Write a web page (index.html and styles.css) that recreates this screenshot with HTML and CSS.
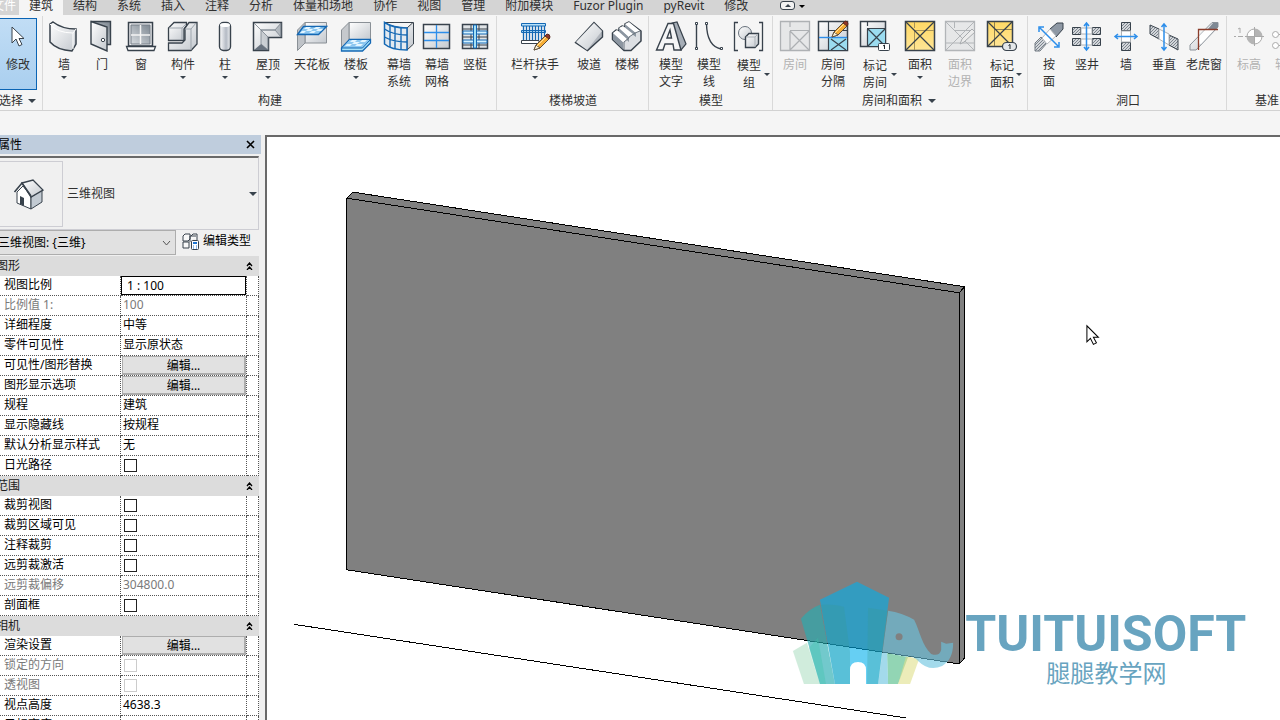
FILE: index.html
```
<!DOCTYPE html>
<html lang="zh-CN">
<head>
<meta charset="utf-8">
<title>三维视图</title>
<link rel="stylesheet" href="styles.css">
</head>
<body>
<svg class="defs" aria-hidden="true">
  <defs>
    <linearGradient id="metal" x1="0" y1="0" x2="1" y2="1"><stop offset="0" stop-color="#fff"/><stop offset="1" stop-color="#c3c8ce"/></linearGradient>
    <linearGradient id="steel" x1="1" y1="0" x2="0" y2="1"><stop offset="0" stop-color="#7e8892"/><stop offset="1" stop-color="#d8dce0"/></linearGradient>
    <linearGradient id="round" x1="0" y1="0" x2="1" y2="0"><stop offset="0" stop-color="#fff"/><stop offset=".6" stop-color="#b4bac4"/><stop offset="1" stop-color="#eef0f2"/></linearGradient>
    <linearGradient id="gold" x1="0" y1="0" x2="0" y2="1"><stop offset="0" stop-color="#ffd964"/><stop offset="1" stop-color="#ffe596"/></linearGradient>
    <pattern id="hatch" width="3" height="3" patternUnits="userSpaceOnUse"><rect width="3" height="3" fill="#d3d6da"/><path d="M0 3L3 0" stroke="#7c858e" stroke-width="1"/></pattern>
    <g id="pencil"><path d="M15 30L17 25L27 15L31 18L21 28Z" fill="#f6ad35" stroke="#5b4a39"/><path d="M15 30L17 25L21 28Z" fill="#fff3d6" stroke="#66563f"/><path d="M26 16L28 14Q31 14 31 17L30 19Z" fill="#8e3528" stroke="#5a2a22"/><path d="M18 26L27 17" stroke="#ffe3a1"/></g>
  </defs>
</svg>

<header class="ribbon">
  <nav class="tabs">
    <button class="tab file">文件</button><button class="tab active">建筑</button><button class="tab">结构</button><button class="tab">系统</button><button class="tab">插入</button><button class="tab">注释</button><button class="tab">分析</button><button class="tab">体量和场地</button><button class="tab">协作</button><button class="tab">视图</button><button class="tab">管理</button><button class="tab">附加模块</button><button class="tab">Fuzor Plugin</button><button class="tab">pyRevit</button><button class="tab">修改</button>
    <button class="minimize" aria-label="最小化功能区"><span class="pill"><i class="up"></i></span><i class="arrow black"></i></button>
  </nav>

  <div class="panels">
    <section class="panel select">
      <div class="tools">
        <button class="tool pressed"><svg class="icon" viewBox="0 0 32 32"><path d="M10 7V23L14 19L17 26L20 24.500L17 18.500H22Z" fill="#fff" stroke="#38424c"/></svg><span>修改</span></button>
      </div>
      <h2>选择 <i class="arrow big"></i></h2>
    </section>

    <section class="panel">
      <div class="tools">
        <button class="tool w40"><svg class="icon" viewBox="0 0 32 32"><path d="M2 4L5 2Q14 9 28 9V24L24 31Q9 30 2 22Z" fill="url(#metal)" stroke="#38424c" stroke-width="1.500"/><path d="M2 4Q9 13 25 13L28 9M25 13V29" fill="none" stroke="#fff"/></svg><span>墙</span><i class="arrow"></i></button>
        <button class="tool w36"><svg class="icon" viewBox="0 0 32 32"><path d="M5 1.500H24.500V24.500H18" fill="url(#steel)" stroke="#38424c" stroke-width="1.400"/><path d="M5 1.500L21 7V31L5 24Z" fill="url(#metal)" stroke="#38424c" stroke-width="1.400"/><circle cx="17" cy="20" r="1.700" fill="#fff" stroke="#38424c"/></svg><span>门</span></button>
        <button class="tool w42"><svg class="icon" viewBox="0 0 32 32"><path d="M3.500 2.500H27.500V26H3.500Z" fill="#eceef0" stroke="#38424c" stroke-width="1.500"/><path d="M6 5H25V24H6Z" fill="url(#steel)" stroke="#777f88"/><path d="M15.500 5V24M6 15H25" stroke="#f4f4f4" stroke-width="1.500"/><path d="M1.500 26.500H30.500L29 30.500H3Z" fill="#fff" stroke="#38424c" stroke-width="1.300"/></svg><span>窗</span></button>
        <button class="tool w42"><svg class="icon" viewBox="0 0 32 32"><path d="M1.500 20.500V8L7 2.500H19.500V6L17 9V20.500Z" fill="url(#metal)" stroke="#38424c" stroke-width="1.300"/><path d="M1.500 23V30.500H24L30 24V2.500H22L18 8V20L15 23Z" fill="url(#metal)" stroke="#38424c" stroke-width="1.300"/><path d="M2 8H15L19 4M15 8V20M18 9H24L29 3M24 9V30" stroke="#9da5ad" fill="none"/></svg><span>构件</span><i class="arrow"></i></button>
        <button class="tool w42"><svg class="icon" viewBox="0 0 32 32"><rect x="10.500" y="2.500" width="11" height="28" rx="4" fill="url(#round)" stroke="#38424c" stroke-width="1.400"/><ellipse cx="16" cy="5" rx="5" ry="2" fill="#fff"/></svg><span>柱</span><i class="arrow"></i></button>
        <button class="tool w44"><svg class="icon" viewBox="0 0 32 32"><path d="M1.500 2.500H29.500V17.500H16.500V30.500H1.500Z" fill="url(#metal)" stroke="#38424c" stroke-width="1.500"/><path d="M2 3L9 10H23L29 3V17L23 10H9V24L16 30V17L9 10" fill="url(#steel)" fill-opacity=".55" stroke="#77808a" stroke-width=".8"/><path d="M2 30L9 24L16 30Z" fill="#68727e"/></svg><span>屋顶</span><i class="arrow"></i></button>
        <button class="tool w44"><svg class="icon" viewBox="0 0 32 32"><path d="M9 2.500H30.500V23H9Z" fill="url(#metal)" stroke="#8a9096"/><path d="M1.500 10L9 2.500V23L1.500 30.500Z" fill="#bfc3c8" stroke="#8a9096"/><path d="M7.500 6.500H30.500L22.500 14.500H1.500Z" fill="#8cc7f0" stroke="#1468b4" stroke-width="1.400"/><path d="M10 7H15L13 9H8ZM20 7H25L22 9H17ZM12 9H17L15 11H10ZM22 9H27L25 11H20ZM6 11H10L8 13H4ZM16 11H20L18 13H13Z" fill="#e3f5ff"/></svg><span>天花板</span></button>
        <button class="tool w44"><svg class="icon" viewBox="0 0 32 32"><path d="M9 2.500H30.500V20H9Z" fill="url(#metal)" stroke="#8a9096"/><path d="M1.500 10L9 2.500V20L1.500 28Z" fill="#c6c9cd" stroke="#8a9096"/><path d="M9.500 19.500H30.500V23L22.500 31H1.500V28Z" fill="#a8e2f8" stroke="#1468b4" stroke-width="1.300"/><path d="M9.500 19.500H30.500L22.500 28H1.500Z" fill="#8cc7f0" stroke="#1468b4"/><path d="M12 20H17L15 22H10ZM22 20H27L25 22H20ZM14 22H20L17 24H12ZM7 24H12L10 26H5ZM17 24H23L21 26H15Z" fill="#e3f5ff"/></svg><span>楼板</span><i class="arrow"></i></button>
        <button class="tool w42"><svg class="icon" viewBox="0 0 32 32"><path d="M1.500 2.500H30.500V24L24 30V8L30 2.500M24 8Q10 8 1.500 2.500" fill="url(#metal)" stroke="#38424c"/><path d="M1.500 2.500Q10 8 24 8V30Q8 30 1.500 24Z" fill="#e3eaf0" stroke="#1468b4" stroke-width="1.500"/><path d="M1.500 9Q10 15 24 15M1.500 17Q10 22 24 22M7 5V27M12 7V29M18 8V30" fill="none" stroke="#1468b4" stroke-width="1.400"/></svg><span>幕墙<br>系统</span></button>
        <button class="tool w34"><svg class="icon" viewBox="0 0 32 32"><rect x="2.500" y="4.500" width="26" height="24" fill="url(#metal)" stroke="#38424c" stroke-width="1.500"/><path d="M15.500 5V28M3 12.500H28M3 20.500H28" stroke="#2d8eea" stroke-width="1.300"/></svg><span>幕墙<br>网格</span></button>
        <button class="tool w42"><svg class="icon" viewBox="0 0 32 32"><path d="M3.500 4.500H28.500V28.500H3.500Z" fill="#dfe3e6" stroke="#38424c" stroke-width="1.500"/><path d="M12 5V28M20 5V28M4 9H28M4 17H28M4 25H28" stroke="#38424c"/><path d="M4 11H28V14H4ZM4 20H28V23H4Z" fill="#d4f1ff" stroke="#1468b4"/><path d="M14.500 5V28H17.500V5Z" fill="#a5e1f6" stroke="#1468b4"/></svg><span>竖梃</span></button>
      </div>
      <h2>构建</h2>
    </section>

    <section class="panel inset">
      <div class="tools">
        <button class="tool w74"><svg class="icon" viewBox="0 0 32 32"><path d="M2.500 3.500H26.500V6H2.500ZM2.500 10.500H26.500V12.500H2.500Z" fill="#b7e1fa" stroke="#1468b4"/><path d="M4.500 6V20M7.500 6V20M10.500 6V20M13.500 6V20M16.500 6V20M19.500 6V20M22.500 6V20M25.500 6V17" stroke="#1468b4" stroke-width="1.300"/><path d="M2.500 20.500H20V23.500H2.500Z" fill="#fff" stroke="#38424c"/><use href="#pencil"/></svg><span>栏杆扶手</span><i class="arrow"></i></button>
        <button class="tool w34"><svg class="icon" viewBox="0 0 32 32"><path d="M21 2.500L29.500 11V17L14.500 30.500L2.500 22.500Z" fill="#b1b6bd" stroke="#38424c" stroke-width="1.400"/><path d="M21 3L29 11L14 30L3 22Z" fill="url(#metal)"/></svg><span>坡道</span></button>
        <button class="tool w42"><svg class="icon" viewBox="0 0 32 32"><path d="M1.500 13L5 10L8 11V8L11 6L14 7V4L18 2L30 11V21L20 30.500H13L1.500 19.500Z" fill="#dcdfe3" stroke="#38424c" stroke-width="1.500" stroke-linejoin="round"/><path d="M2 13L12 22V29L2 19.500ZM8 8L18 17V22L8 13ZM14 4L25 13V17L14 9Z" fill="#8c96a1"/><path d="M2 13L6 10L16 19L12 22ZM8 8L12 6L22 14L18 17ZM14 4L18 2L29 11L25 13Z" fill="#fff"/><path d="M13 30V22L18 18V17L24 13L29 11" fill="none" stroke="#68727c"/></svg><span>楼梯</span></button>
      </div>
      <h2>楼梯坡道</h2>
    </section>

    <section class="panel inset">
      <div class="tools">
        <button class="tool w42"><svg class="icon" viewBox="0 0 32 32"><path d="M17 3L22 2L31 24L26 30L22 28L14 9Z" fill="#a5adb6" stroke="#38424c" stroke-width="1.200"/><path d="M1.500 30L13 3.500H18.500L26 30H19L18 24H10L8 30ZM12 18H16.500L15 10Z" fill="#f4f5f6" fill-rule="evenodd" stroke="#38424c" stroke-width="1.400"/></svg><span>模型<br>文字</span></button>
        <button class="tool w34"><svg class="icon" viewBox="0 0 32 32"><path d="M3.500 4V28M13.500 4Q14 26 28 29" fill="none" stroke="#38424c" stroke-width="1.400"/><path d="M2.500 2.500H4.500V4.500H2.500ZM2.500 27.500H4.500V29.500H2.500ZM12.500 2.500H14.500V4.500H12.500ZM27.500 27.500H29.500V29.500H27.500Z" fill="#fff" stroke="#38424c"/></svg><span>模型<br>线</span></button>
        <button class="tool w46 split"><svg class="icon" viewBox="0 0 32 32"><path d="M5 2.500H1.500V30.500H5M26 2.500H29.500V30.500H26" fill="none" stroke="#38424c" stroke-width="1.300"/><circle cx="12" cy="13" r="6.500" fill="url(#metal)" stroke="#68727c"/><path d="M12.500 17L16 13.500H25.500V24L22 27.500H12.500Z" fill="url(#metal)" stroke="#38424c" stroke-width="1.400"/><path d="M13 17H22L25 14M22 17V27" stroke="#adb3b9" fill="none"/></svg><span>模型<br>组</span><i class="arrow"></i></button>
      </div>
      <h2>模型</h2>
    </section>

    <section class="panel inset rooms">
      <div class="tools">
        <button class="tool w42" disabled><svg class="icon" viewBox="0 0 32 32"><path d="M1.500 1.500H30.500V30.500H1.500Z" fill="#e6e7e8" stroke="#aeb1b4" stroke-width="1.300"/><path d="M11 2V7M11 11V30M11 10.500H30M11 11L30 30M30 11L11 30" stroke="#adb0b3" stroke-width="1.200"/></svg><span>房间</span></button>
        <button class="tool w34"><svg class="icon" viewBox="0 0 32 32"><path d="M1.500 1.500H30.500V30.500H1.500Z" fill="url(#metal)" stroke="#38424c" stroke-width="1.500"/><path d="M12 17H30V30H12Z" fill="#9bdcf0"/><path d="M11.500 2V30M11 10.500H30M14 19L29 30M29 19L14 30" stroke="#38424c" stroke-width="1.200"/><path d="M2 17.500H30" stroke="#2d8eea" stroke-width="1.400"/><use href="#pencil" transform="translate(0 -13)"/></svg><span>房间<br>分隔</span></button>
        <button class="tool w50 split"><svg class="icon" viewBox="0 0 32 32"><path d="M1.500 1.500H26.500V26.500H1.500Z" fill="url(#metal)" stroke="#38424c" stroke-width="1.500"/><path d="M9 9H26V26H9Z" fill="#9bdcf0"/><path d="M8.500 2V6M8.500 9V26M8 8.500H26M9 9L26 26M26 9L9 26" stroke="#38424c" stroke-width="1.200"/><rect x="19.500" y="23.500" width="11" height="7" rx="1" fill="#fff" stroke="#38424c"/><path d="M24 26L25.500 25V29" fill="none" stroke="#20282f"/></svg><span>标记<br>房间</span><i class="arrow"></i></button>
        <button class="tool w40"><svg class="icon" viewBox="0 0 32 32"><path d="M1.500 1.500H30.500V30.500H1.500Z" fill="url(#gold)" stroke="#38424c" stroke-width="1.500"/><path d="M10.500 2V8M10.500 11V30M10 10.500H30" stroke="#a99458"/><path d="M2 2L30 30M30 2L2 30" stroke="#38424c" stroke-width="1.200"/></svg><span>面积</span><i class="arrow"></i></button>
        <button class="tool w40" disabled><svg class="icon" viewBox="0 0 32 32"><path d="M1.500 1.500H30.500V30.500H1.500Z" fill="#e6e7e8" stroke="#b2b5b8" stroke-width="1.300"/><path d="M10.500 2V8M10 10.500H30M2 2L30 30M30 2L2 30M2 23H30" stroke="#b2b5b8"/><path d="M16 24L18 19L28 9L31 12L20 22Z" fill="#ececec" stroke="#a8abae"/></svg><span>面积<br>边界</span></button>
        <button class="tool w44 split"><svg class="icon" viewBox="0 0 32 32"><path d="M1.500 1.500H26.500V26.500H1.500Z" fill="url(#gold)" stroke="#38424c" stroke-width="1.500"/><path d="M8.500 2V8M8.500 10V26M8 9.500H26" stroke="#8e804f"/><path d="M2 2L26 26M26 2L2 26" stroke="#38424c" stroke-width="1.200"/><rect x="16.500" y="22.500" width="14" height="8" rx="4" fill="#e5e8ea" stroke="#38424c" stroke-width="1.200"/><path d="M22.500 25.500L24 24.500V29" fill="none" stroke="#20282f"/></svg><span>标记<br>面积</span><i class="arrow"></i></button>
      </div>
      <h2>房间和面积 <i class="arrow big"></i></h2>
    </section>

    <section class="panel openings">
      <div class="tools">
        <button class="tool w38"><svg class="icon" viewBox="0 0 32 32"><path d="M2 23L8 17L14 23L7 31H2Z" fill="url(#hatch)" stroke="#737b83"/><path d="M17 9L24 3H30V9L23 17Z" fill="#8e98a4" stroke="#38424c"/><path d="M9 18L17 9L23 16L14 24Z" fill="#fff" stroke="#b6babe"/><path d="M7 8L25 26M6 12V7H11M21 27H26V22" fill="none" stroke="#2d8eea" stroke-width="1.500"/></svg><span>按<br>面</span></button>
        <button class="tool w38"><svg class="icon" viewBox="0 0 32 32"><path d="M1.500 7.500H9.500V14.500H1.500ZM21.500 7.500H29.500V14.500H21.500ZM1.500 18.500H9.500V25.500H1.500ZM21.500 18.500H29.500V25.500H21.500Z" fill="url(#hatch)" stroke="#38424c"/><path d="M10 8H21V14H10ZM10 19H21V25H10Z" fill="#fff" stroke="#aeb2b6"/><path d="M15.500 3V30M13 6L15.500 3L18 6M13 27L15.500 30L18 27" fill="none" stroke="#2d8eea" stroke-width="1.500"/></svg><span>竖井</span></button>
        <button class="tool w40"><svg class="icon" viewBox="0 0 32 32"><path d="M11.500 2.500H20.500V10.500H11.500ZM11.500 22.500H20.500V30.500H11.500Z" fill="url(#hatch)" stroke="#38424c"/><path d="M11.500 11H20.500V22H11.500Z" fill="#fff" stroke="#aeb2b6"/><path d="M5 16.500H27M8 14L5 16.500L8 19M24 14L27 16.500L24 19" fill="none" stroke="#2d8eea" stroke-width="1.500"/></svg><span>墙</span></button>
        <button class="tool w36"><svg class="icon" viewBox="0 0 32 32"><path d="M2 5L11 9V19L2 14ZM21 15L30 19V30L21 25Z" fill="url(#hatch)" stroke="#38424c"/><path d="M11 9L21 14V25L11 19Z" fill="#fff" stroke="#aeb2b6"/><path d="M16 4V30M13.500 7L16 4L18.500 7M13.500 27L16 30L18.500 27" fill="none" stroke="#2d8eea" stroke-width="1.500"/></svg><span>垂直</span></button>
        <button class="tool w44"><svg class="icon" viewBox="0 0 32 32"><path d="M2 30V25L24 2.500H30V7L8 30Z" fill="url(#metal)" stroke="#8b9299"/><path d="M20 9L25 3H30V7L27 10Z" fill="#7f8994"/><path d="M10 23V17L18 9H27L13 24Z" fill="#fff"/><path d="M10.500 30V9.500H30" fill="none" stroke="#8b3d2b" stroke-width="1.300"/></svg><span>老虎窗</span></button>
      </div>
      <h2>洞口</h2>
    </section>

    <section class="panel datum">
      <div class="tools">
        <button class="tool w40" disabled><svg class="icon" viewBox="0 0 32 32"><path d="M1 16.500H3M5 16.500H10M12 16.500H15M5 9L7 8V13" fill="none" stroke="#aaa"/><circle cx="21.500" cy="16.500" r="7.500" fill="#fff" stroke="#aaa"/><path d="M21.500 16.500V9A7.500 7.500 0 0 1 29 16.500ZM21.500 16.500V24A7.500 7.500 0 0 1 14 16.500Z" fill="#b5b5b5"/><path d="M21.500 7V26M12 16.500H31" stroke="#aaa"/></svg><span>标高</span></button>
        <button class="tool w36" disabled><svg class="icon" viewBox="0 0 32 32"><path d="M8 14.500H31M8 25.500H31" stroke="#aaa"/><circle cx="4.500" cy="14.500" r="3" fill="#fff" stroke="#aaa"/><circle cx="4.500" cy="25.500" r="3" fill="#fff" stroke="#aaa"/></svg><span>轴网</span></button>
      </div>
      <h2>基准</h2>
    </section>
  </div>
</header>

<div class="options"></div>

<main class="workspace">
  <aside class="palette">
    <header class="palette-head"><h1>属性</h1><button aria-label="关闭"><svg viewBox="0 0 9 9"><path d="M1 1L8 8M8 1L1 8" stroke="#000" stroke-width="1.600"/></svg></button></header>
    <div class="type">
      <div class="thumb"><svg viewBox="0 0 32 32"><path d="M4 14L10 8L18 18V31L4 25Z" fill="#fff" stroke="#38424c"/><path d="M18 19L29 12V24L18 31Z" fill="#c2cad2" stroke="#38424c"/><path d="M7 18L11 20V28L7 26Z" fill="#38424c"/><path d="M9 5L20 2L30 12L18 19Z" fill="url(#metal)" stroke="#38424c" stroke-width="1.300"/><path d="M1.500 14L9 5L18 18" fill="none" stroke="#38424c" stroke-width="1.600"/></svg></div>
      <span>三维视图</span><i class="arrow big"></i>
    </div>
    <div class="instance">
      <select aria-label="视图"><option>三维视图: {三维}</option></select>
      <button><svg viewBox="0 0 17 17"><path d="M1 3L3 1H8V6L6 8H1ZM9 3L11 1H15V7M1 9H7V15H1ZM8 9V3H14" fill="#f8f8f8" stroke="#38424c"/><rect x="9.500" y="7.500" width="7" height="9" rx="1" fill="#fff" stroke="#38424c"/><path d="M11 9H15V11H11Z" fill="#1f75d1"/><path d="M11 13H12M14 13H15M11 15H12M14 15H15" stroke="#1f75d1"/></svg>编辑类型</button>
    </div>
    <table class="props">
      <colgroup><col class="name"><col class="value"><col class="link"></colgroup>
      <tbody>
        <tr class="group"><th colspan="3"><div><span>图形</span><svg viewBox="0 0 7 8"><path d="M1 4L3.500 1L6 4M1 8L3.500 5L6 8" fill="none" stroke="#000" stroke-width="1.300"/></svg></div></th></tr>
        <tr><td><label for="scale">视图比例</label></td><td><input id="scale" class="edit" value="1 : 100"></td><td></td></tr>
        <tr class="off"><td>比例值 1:</td><td>100</td><td></td></tr>
        <tr><td>详细程度</td><td>中等</td><td></td></tr>
        <tr><td>零件可见性</td><td>显示原状态</td><td></td></tr>
        <tr><td>可见性/图形替换</td><td><button>编辑...</button></td><td></td></tr>
        <tr><td>图形显示选项</td><td><button>编辑...</button></td><td></td></tr>
        <tr><td>规程</td><td>建筑</td><td></td></tr>
        <tr><td>显示隐藏线</td><td>按规程</td><td></td></tr>
        <tr><td>默认分析显示样式</td><td>无</td><td></td></tr>
        <tr><td><label for="sun">日光路径</label></td><td><input id="sun" type="checkbox"></td><td></td></tr>
      </tbody>
      <tbody>
        <tr class="group"><th colspan="3"><div><span>范围</span><svg viewBox="0 0 7 8"><path d="M1 4L3.500 1L6 4M1 8L3.500 5L6 8" fill="none" stroke="#000" stroke-width="1.300"/></svg></div></th></tr>
        <tr><td><label for="crop">裁剪视图</label></td><td><input id="crop" type="checkbox"></td><td></td></tr>
        <tr><td><label for="region">裁剪区域可见</label></td><td><input id="region" type="checkbox"></td><td></td></tr>
        <tr><td><label for="anno">注释裁剪</label></td><td><input id="anno" type="checkbox"></td><td></td></tr>
        <tr><td><label for="far">远剪裁激活</label></td><td><input id="far" type="checkbox"></td><td></td></tr>
        <tr class="off"><td>远剪裁偏移</td><td>304800.0</td><td></td></tr>
        <tr><td><label for="box">剖面框</label></td><td><input id="box" type="checkbox"></td><td></td></tr>
      </tbody>
      <tbody>
        <tr class="group"><th colspan="3"><div><span>相机</span><svg viewBox="0 0 7 8"><path d="M1 4L3.500 1L6 4M1 8L3.500 5L6 8" fill="none" stroke="#000" stroke-width="1.300"/></svg></div></th></tr>
        <tr><td>渲染设置</td><td><button>编辑...</button></td><td></td></tr>
        <tr class="off"><td><label for="lock">锁定的方向</label></td><td><input id="lock" type="checkbox" disabled></td><td></td></tr>
        <tr class="off"><td><label for="persp">透视图</label></td><td><input id="persp" type="checkbox" disabled></td><td></td></tr>
        <tr><td>视点高度</td><td>4638.3</td><td></td></tr>
        <tr><td>目标高度</td><td></td><td></td></tr>
      </tbody>
    </table>
  </aside>

  <section class="canvas">
    <svg viewBox="267 138 1013 582" preserveAspectRatio="xMinYMin slice">
      <g fill="#808080" stroke="#000" shape-rendering="crispEdges">
        <path d="M346.500 199L352.500 193L963.500 287.500V658L958 664L346.500 570Z"/>
        <path d="M346.500 199L958 293.500V664M958 293.500L963.500 287.500M294 624.500L905 718" fill="none"/>
      </g>
      <g>
        <path d="M792 651L806 643L819 684H803Z" fill="#a9dcc0" opacity=".55"/>
        <path d="M886 653L907 657L897 684H887Z" fill="#5fc190" opacity=".68"/>
        <path d="M905 656L918 659L909 684H897Z" fill="#dfdf8a" opacity=".6"/>
        <path d="M800 619Q808 609 819 605L834 684H819Z" fill="#26acb1" opacity=".65"/>
        <path d="M817 638L825 684H819L808 648Z" fill="#3cc3a8" opacity=".35"/>
        <path d="M887 611Q901 613 913 620C919 632 921 646 930 654Q938 657 940 650V642L945 644L952 643Q952 660 941 666Q928 672 917 661Q912 656 907 657L886 653L887 684H877Z" fill="#6bc3de" opacity=".62"/>
        <path d="M819 600L856 582L888 598L877 684H865V670Q865 662 857 662Q849 662 849 670V684H834Z" fill="#00afeb" opacity=".6"/>
        <path d="M820 605Q832 604 843 607L849 652V684H834ZM867 608L887 611L877 684H866Z" fill="#3a9c94" opacity=".28"/>
        <circle cx="898" cy="637" r="3.500" fill="#808080"/>
      </g>
      <text class="brand" x="964" y="651">TUITUISOFT</text>
      <text class="brand-sub" x="1045" y="682">腿腿教学网</text>
      <path d="M1085.500 326.500V342.500L1089 339L1092 345L1095 343.500L1092 338H1097Z" fill="#fff" stroke="#000"/>
    </svg>
  </section>
</main>
</body>
</html>
```
FILE: styles.css
```
* { box-sizing: border-box; }
html, body { height: 100%; }
body {
  margin: 0;
  display: flex;
  flex-direction: column;
  overflow: hidden;
  background: #f5f5f5;
  color: #303030;
  font: 12px/16px "Noto Sans", "Noto Sans CJK SC", sans-serif;
}
button, input, select { font: inherit; color: inherit; border: 0; padding: 0; margin: 0; background: none; }
h1, h2 { margin: 0; font: inherit; }
.defs { width: 0; height: 0; position: absolute; }

/* ribbon */
.ribbon { flex: none; overflow: hidden; border-bottom: 1px solid #d2d2d2; }
.tabs { display: flex; height: 15px; background: #d4d4d4; margin-left: -20px; }
.tab { flex: none; padding: 0 10px; height: 15px; line-height: 12px; display: flex; white-space: nowrap; }
.tab.file { padding: 0 3px 0 12px; color: #fff; }
.tab.active { background: #f5f5f5; }
.minimize { display: flex; align-items: flex-start; gap: 4px; padding: 1px 0 0 22px; }
.pill { width: 15px; height: 9px; border: 1px solid #38424c; border-radius: 3px; background: #f2f2f2; display: flex; align-items: center; justify-content: center; }
.up { border: 3px solid transparent; border-top: 0; border-bottom-color: #38424c; }
.arrow { display: inline-block; flex: none; width: 6px; height: 3px; border: 3px solid transparent; border-top-color: #38424c; border-bottom: 0; }
.arrow.big { width: 8px; height: 4px; border-width: 4px 4px 0; }
.arrow.black { margin-top: 4px; border-top-color: #000; }

.panels { display: flex; padding-top: 1px; }
.panel { flex: none; border-right: 1px solid #d9d9d9; display: flex; flex-direction: column; height: 94px; }
.panel.inset { padding-left: 1px; }
.panel:nth-child(2) { padding-left: 1px; }
.panel.rooms { padding-right: 3px; }
.panel.openings, .panel.datum { padding-left: 2px; }
.panel h2 { display: flex; align-items: center; justify-content: center; gap: 6px; line-height: 17px; height: 17px; white-space: nowrap; }
.panel.select { width: 43px; }
.panel.select h2 { justify-content: flex-end; padding-right: 6px; gap: 5px; }
.tools { display: flex; height: 76px; }
.tool { flex: none; display: flex; flex-direction: column; align-items: center; justify-content: flex-start; padding-top: 4px; line-height: 17px; text-align: center; white-space: nowrap; }
.tool:disabled { color: #b2b2b2; }
.tool .arrow { margin-top: 3px; }
.icon { width: 32px; height: 32px; flex: none; display: block; margin-bottom: 4px; }
.tool.pressed { width: 38px; height: 72px; margin: 2px 0 0 -1px; padding-top: 1px; border: 1px solid #0a64b4; background: linear-gradient(#c1ddf5, #aacfef); }
.tool.split { display: grid; grid-template-columns: 1fr auto 1fr; grid-template-rows: 36px auto; align-items: center; justify-items: center; }
.tool.split .icon { grid-column: 1 / 4; }
.tool.split span { grid-column: 2; }
.tool.split .arrow { grid-column: 3; margin: 0; }
.w34 { width: 34px; }
.w36 { width: 36px; }
.w38 { width: 38px; }
.w40 { width: 40px; }
.w42 { width: 42px; }
.w44 { width: 44px; }
.w46 { width: 46px; }
.w50 { width: 50px; }
.w74 { width: 74px; }
.options { flex: none; height: 24px; background: #f5f5f5; }

/* workspace */
.workspace { flex: 1; min-height: 0; display: flex; background: #f0f0f0; }
.palette { flex: none; width: 261px; margin-right: 4px; overflow: hidden; color: #000; }
.palette-head { display: flex; align-items: center; justify-content: space-between; height: 19px; padding-right: 6px; background: #bfcddd; margin-left: -2px; }
.palette-head button { display: flex; }
.palette-head svg { width: 9px; height: 9px; }
.type { display: flex; align-items: center; gap: 4px; height: 74px; margin: 2px 2px 0 0; border: 1px solid #cdcdd3; border-top: 2px solid #696969; border-left: 0; color: #303030; }
.thumb { width: 63px; height: 66px; border: 1px solid #cdcdd3; border-left: 0; display: flex; align-items: center; justify-content: center; }
.thumb svg { width: 32px; height: 32px; margin-right: 4px; }
.type .arrow { margin-left: auto; margin-right: 1px; }
.instance { display: flex; height: 26px; margin-left: -3px; gap: 6px; }
.instance select { width: 179px; height: 25px; border: 1px solid #adadad; padding-right: 20px; appearance: none; background: #e1e1e1 url("data:image/svg+xml,%3Csvg xmlns='http://www.w3.org/2000/svg' width='9' height='6'%3E%3Cpath d='M1 1L4.500 5L8 1' fill='none' stroke='%23555'/%3E%3C/svg%3E") no-repeat right 4px center; }
.instance button { display: flex; align-items: center; gap: 4px; height: 22px; }
.instance svg { width: 17px; height: 17px; }

.props { width: 259px; table-layout: fixed; border-collapse: separate; border-spacing: 0; background: #fff; }
.name { width: 121px; }
.value { width: 126px; }
.link { width: 12px; }
.props td { height: 20px; padding: 0 0 0 4px; line-height: 18px; border-right: 1px dotted #555; border-bottom: 1px dotted #555; white-space: nowrap; vertical-align: top; overflow: hidden; }
.props td + td { padding-left: 2px; }
.props td label { display: block; }
.props .off { color: #7a7a7a; }
.group th { height: 20px; padding: 0; background: #dcdcdc; font-weight: 400; color: #202020; }
.group div { display: flex; align-items: center; justify-content: space-between; line-height: 18px; margin: 0 6px 0 -4px; }
.group svg { width: 7px; height: 8px; }
.props .edit { display: block; width: 125px; height: 19px; margin-left: -2px; padding: 0 5px; border: 1px solid #000; background: #fff; }
.props td button { display: block; width: 124px; height: 19px; margin-left: -1px; border: 1px solid #adadad; border-right-width: 2px; border-bottom-width: 2px; background: #e1e1e1; line-height: 18px; }
.props input[type="checkbox"] { appearance: none; display: block; width: 13px; height: 13px; margin: 3px 0 0 1px; border: 1px solid #222; background: #fff; }
.props input[type="checkbox"]:disabled { border-color: #ccc; }

.canvas { flex: 1; min-width: 0; border-left: 2px solid #696969; border-top: 2px solid #696969; background: #fff; }
.canvas svg { display: block; width: 100%; height: 100%; }
.brand { font: 700 50px Roboto, sans-serif; fill: #68a4c0; }
.brand-sub { font: 24px "Noto Sans CJK SC", sans-serif; fill: #68a4c0; }
```
